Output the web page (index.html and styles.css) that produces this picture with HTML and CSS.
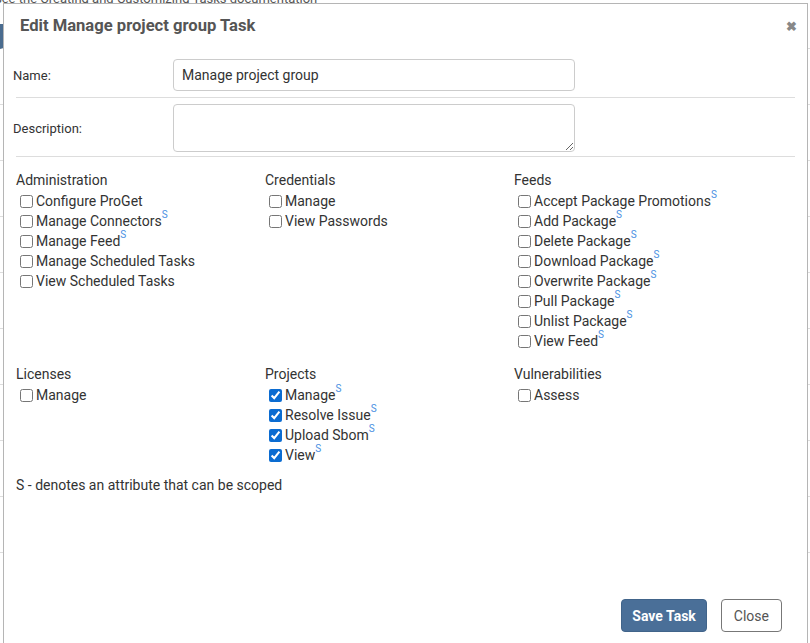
FILE: index.html
```html
<!DOCTYPE html>
<html lang="en">
<head>
  <meta charset="UTF-8">
  <meta name="viewport" content="width=device-width, initial-scale=1.0">
  <title>Edit Task</title>
  <link rel="stylesheet" href="styles.css">
</head>
<body>
  <div class="page">
    <p class="page-note">See the Creating and Customizing Tasks documentation</p>
    <div class="page-rows">
      <div class="page-row"></div>
      <div class="page-row"></div>
      <div class="page-row"></div>
      <div class="page-row"></div>
      <div class="page-row"></div>
      <div class="page-row"></div>
      <div class="page-row"></div>
      <div class="page-row"></div>
      <div class="page-row"></div>
      <div class="page-row"></div>
    </div>
  </div>

  <div class="modal">
    <div class="modal-header">
      <h3 class="modal-title">Edit Manage project group Task</h3>
      <span class="modal-close">&#10006;</span>
    </div>

    <div class="modal-body">
      <div class="form-row">
        <label class="form-label" for="name">Name:</label>
        <input class="form-input" id="name" type="text" value="Manage project group">
      </div>
      <div class="form-row">
        <label class="form-label" for="desc">Description:</label>
        <textarea class="form-input form-textarea" id="desc"></textarea>
      </div>

      <div class="groups">
        <div class="group">
          <div class="group-title">Administration</div>
          <label class="perm"><input type="checkbox">Configure ProGet</label>
          <label class="perm"><input type="checkbox">Manage Connectors<sup>S</sup></label>
          <label class="perm"><input type="checkbox">Manage Feed<sup>S</sup></label>
          <label class="perm"><input type="checkbox">Manage Scheduled Tasks</label>
          <label class="perm"><input type="checkbox">View Scheduled Tasks</label>
        </div>
        <div class="group">
          <div class="group-title">Credentials</div>
          <label class="perm"><input type="checkbox">Manage</label>
          <label class="perm"><input type="checkbox">View Passwords</label>
        </div>
        <div class="group">
          <div class="group-title">Feeds</div>
          <label class="perm"><input type="checkbox">Accept Package Promotions<sup>S</sup></label>
          <label class="perm"><input type="checkbox">Add Package<sup>S</sup></label>
          <label class="perm"><input type="checkbox">Delete Package<sup>S</sup></label>
          <label class="perm"><input type="checkbox">Download Package<sup>S</sup></label>
          <label class="perm"><input type="checkbox">Overwrite Package<sup>S</sup></label>
          <label class="perm"><input type="checkbox">Pull Package<sup>S</sup></label>
          <label class="perm"><input type="checkbox">Unlist Package<sup>S</sup></label>
          <label class="perm"><input type="checkbox">View Feed<sup>S</sup></label>
        </div>
        <div class="group">
          <div class="group-title">Licenses</div>
          <label class="perm"><input type="checkbox">Manage</label>
        </div>
        <div class="group">
          <div class="group-title">Projects</div>
          <label class="perm"><input type="checkbox" checked>Manage<sup>S</sup></label>
          <label class="perm"><input type="checkbox" checked>Resolve Issue<sup>S</sup></label>
          <label class="perm"><input type="checkbox" checked>Upload Sbom<sup>S</sup></label>
          <label class="perm"><input type="checkbox" checked>View<sup>S</sup></label>
        </div>
        <div class="group">
          <div class="group-title">Vulnerabilities</div>
          <label class="perm"><input type="checkbox">Assess</label>
        </div>
      </div>

      <p class="scope-note">S - denotes an attribute that can be scoped</p>
    </div>

    <div class="modal-footer">
      <button class="btn btn-primary">Save Task</button>
      <button class="btn btn-default">Close</button>
    </div>
  </div>
</body>
</html>
```

FILE: styles.css
```css
body {
  margin: 0;
  font-family: Roboto, "Liberation Sans", sans-serif;
  color: #333;
  background-color: #fff;
  overflow: hidden;
}

/* page behind the dialog */
.page {
  height: 643px;
}

.page-note {
  margin: 0;
  margin-top: -9px;
  margin-left: -6px;
  font-size: 13px;
  color: #555;
}

.page-rows {
  margin-top: 18px;
}

.page-row {
  height: 55px;
  border-bottom: 1px solid #ddd;
}

.page-row:first-child {
  height: 24px;
  border-left: 3px solid #4a6c8f;
}

/* dialog */
.modal {
  position: absolute;
  left: 3px;
  top: 3px;
  width: 803px;
  height: 650px;
  background-color: #fff;
  border: 1px solid #b5b5b5;
  display: flex;
  flex-direction: column;
}

.modal-header {
  display: flex;
  justify-content: space-between;
  align-items: center;
  padding: 6px 10px 0 16px;
  height: 30px;
}

.modal-title {
  margin: 0;
  font-size: 16.6px;
  font-weight: 700;
  color: #555;
}

.modal-close {
  font-size: 13px;
  font-weight: 700;
  color: #888;
  margin-top: 2px;
}

.modal-body {
  flex: 1;
  padding: 19px 12px 0 8px;
}

.form-row {
  display: flex;
  align-items: center;
  padding: 0 0 6px;
  border-bottom: 1px solid #ddd;
  margin-bottom: 6px;
  margin-left: 4px;
}

.form-row:nth-child(2) {
  margin-bottom: 0;
  padding-bottom: 4px;
}

.form-label {
  width: 160px;
  margin-left: -3px;
  font-size: 13px;
}

.form-input {
  box-sizing: border-box;
  width: 402px;
  height: 32px;
  padding: 0 8px;
  border: 1px solid #ccc;
  border-radius: 4px;
  font-family: inherit;
  font-size: 14px;
  color: #333;
}

.form-textarea {
  height: 48px;
  resize: vertical;
}

.groups {
  display: grid;
  grid-template-columns: 249px 249px 1fr;
  row-gap: 13px;
  padding: 13px 0 0 4px;
}

.group-title {
  font-size: 14px;
  line-height: 20px;
  margin-bottom: 1px;
}

.perm {
  display: flex;
  align-items: center;
  font-size: 14px;
  line-height: 20px;
  color: #333;
}

.perm input {
  margin: 0 3px 0 4px;
  width: 13px;
  height: 13px;
  accent-color: #0b6cd1;
}

.perm sup {
  align-self: flex-start;
  font-size: 10px;
  line-height: 10px;
  color: #4a90e2;
  margin-top: -1px;
}

.scope-note {
  margin: 10px 0 0 4px;
  font-size: 14px;
  line-height: 20px;
}

.modal-footer {
  display: flex;
  justify-content: flex-end;
  gap: 14px;
  padding: 0 25px 22px 0;
}

.btn {
  height: 33px;
  padding: 0 12px;
  border-radius: 4px;
  font-family: inherit;
  font-size: 14px;
  cursor: pointer;
}

.btn-primary {
  padding: 0 10px;
  background-color: #4a6f98;
  border: 1px solid #41648a;
  color: #fff;
  font-weight: 700;
}

.btn-default {
  background-color: #fff;
  border: 1px solid #777;
  color: #555;
}
```
